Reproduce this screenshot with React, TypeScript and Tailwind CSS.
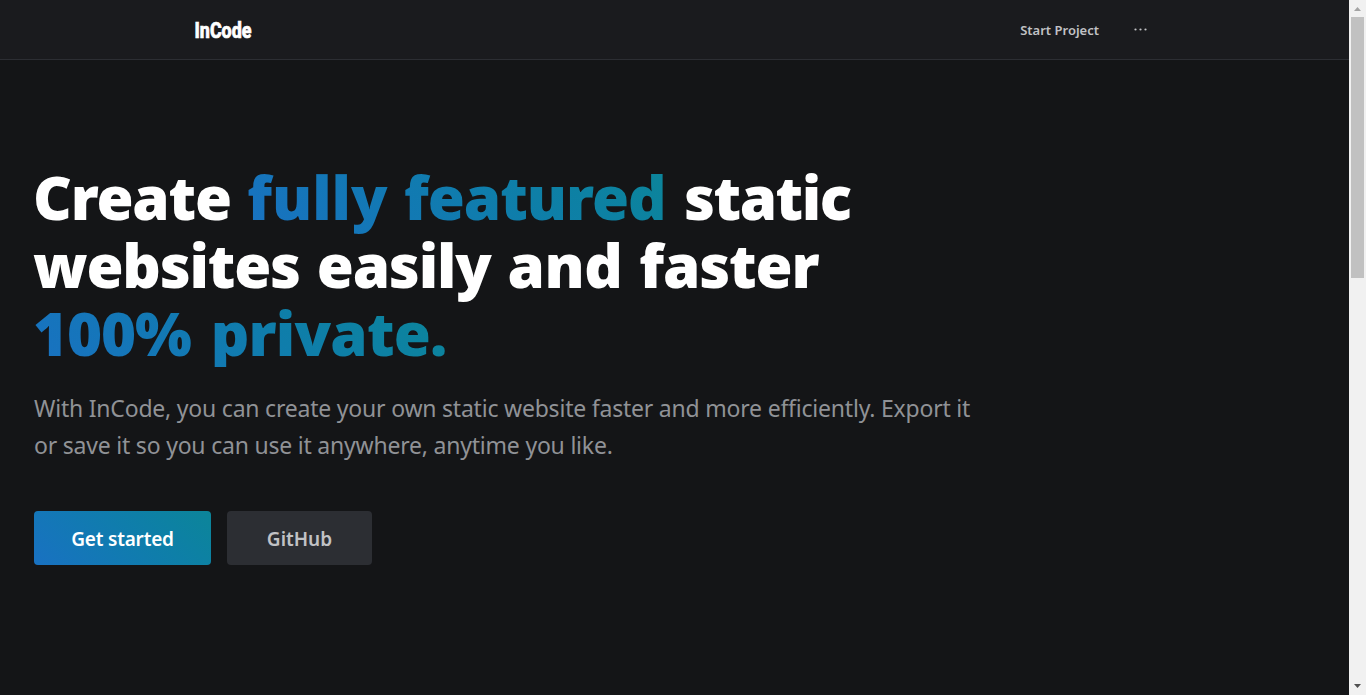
import React from "react";

const gradient = "bg-linear-45 from-[#1971c2] to-[#0c8599]";
const accent = `${gradient} bg-clip-text text-transparent`;

function Scrollbar() {
  return (
    <div className="flex h-full w-[17px] shrink-0 flex-col items-center bg-[#f1f1f1]">
      <svg className="h-[17px] w-[17px] shrink-0" viewBox="0 0 17 17">
        <path d="M5 11h7L8.500 7z" fill="#a3a3a3" />
      </svg>
      <div className="h-[261px] w-[13px] bg-[#c1c1c1]" />
      <div className="flex-1" />
      <svg className="h-[17px] w-[17px] shrink-0" viewBox="0 0 17 17">
        <path d="M5 6h7L8.500 10z" fill="#505050" />
      </svg>
    </div>
  );
}

export default function App() {
  return (
    <div className="flex h-[695px] w-full overflow-hidden bg-[#141517] font-['Noto_Sans','Open_Sans',sans-serif]">
      <div className="flex min-w-0 flex-1 flex-col">
        <header className="flex h-[60px] shrink-0 items-center justify-between border-b border-[#2c2e33] bg-[#1a1b1e] pr-[201px] pl-[195px]">
          <a className="flex h-7 w-14 items-center text-white">
            <svg className="h-7 w-14 overflow-visible" viewBox="0 0 56 28">
              <text x="-0.5" y="22" textLength="57" lengthAdjust="spacingAndGlyphs" fill="currentColor" stroke="currentColor" strokeWidth="0.7" className="font-['Roboto',sans-serif] text-[22px] font-extrabold">InCode</text>
            </svg>
          </a>
          <nav className="flex items-center">
            <a className="mr-[35px] pt-0.5 text-[13px] font-semibold whitespace-nowrap text-[#c1c2c5]">Start Project</a>
            <svg className="h-4 w-[14px]" viewBox="0 0 14 16" fill="#c1c2c5">
              <circle cx="1.500" cy="7.500" r="1.100" />
              <circle cx="6.500" cy="7.500" r="1.100" />
              <circle cx="11.500" cy="7.500" r="1.100" />
            </svg>
          </nav>
        </header>
        <main className="px-[34px] pt-[103px] whitespace-nowrap">
          <h1 className="-ml-px text-[60px] leading-[68px] font-black text-white">
            <span className="block [word-spacing:0.8px]">
              <span className="tracking-[-1.2px]">Create</span>{" "}
              <span className={accent}>
                fully <span className="tracking-[-1px]">featured</span>
              </span>{" "}
              <span className="ml-0.5 tracking-[-1.5px]">static</span>
            </span>
            <span className="block [word-spacing:1.2px]">
              <span className="tracking-[-1.2px]">websites</span>{" "}
              <span className="tracking-[-1.150px]">easily</span>{" "}
              <span className="tracking-[-0.4px]">and</span>{" "}
              <span className="tracking-[-1.150px]">faster</span>
            </span>
            <span className={`block w-fit [word-spacing:4.5px] ${accent}`}>
              <span className="tracking-[-1.2px]">100%</span> <span className="tracking-[-0.8px]">private.</span>
            </span>
          </h1>
          <p className="mt-[23px] text-[23px] leading-[37px] tracking-[-0.21px] text-[#909296]">
            <span className="block">With InCode, you can create your own static website faster and more efficiently. Export it</span>
            <span className="block">or save it so you can use it anywhere, anytime you like.</span>
          </p>
          <div className="mt-[47px] flex gap-4">
            <button className={`h-[54px] w-[177px] rounded ${gradient} pt-0.5 text-[19px] font-semibold tracking-[-0.2px] text-white`}>Get started</button>
            <button className="h-[54px] w-[145px] rounded bg-[#2c2e33] pt-0.5 text-[19px] font-semibold text-[#c1c2c5]">GitHub</button>
          </div>
        </main>
      </div>
      <Scrollbar />
    </div>
  );
}
